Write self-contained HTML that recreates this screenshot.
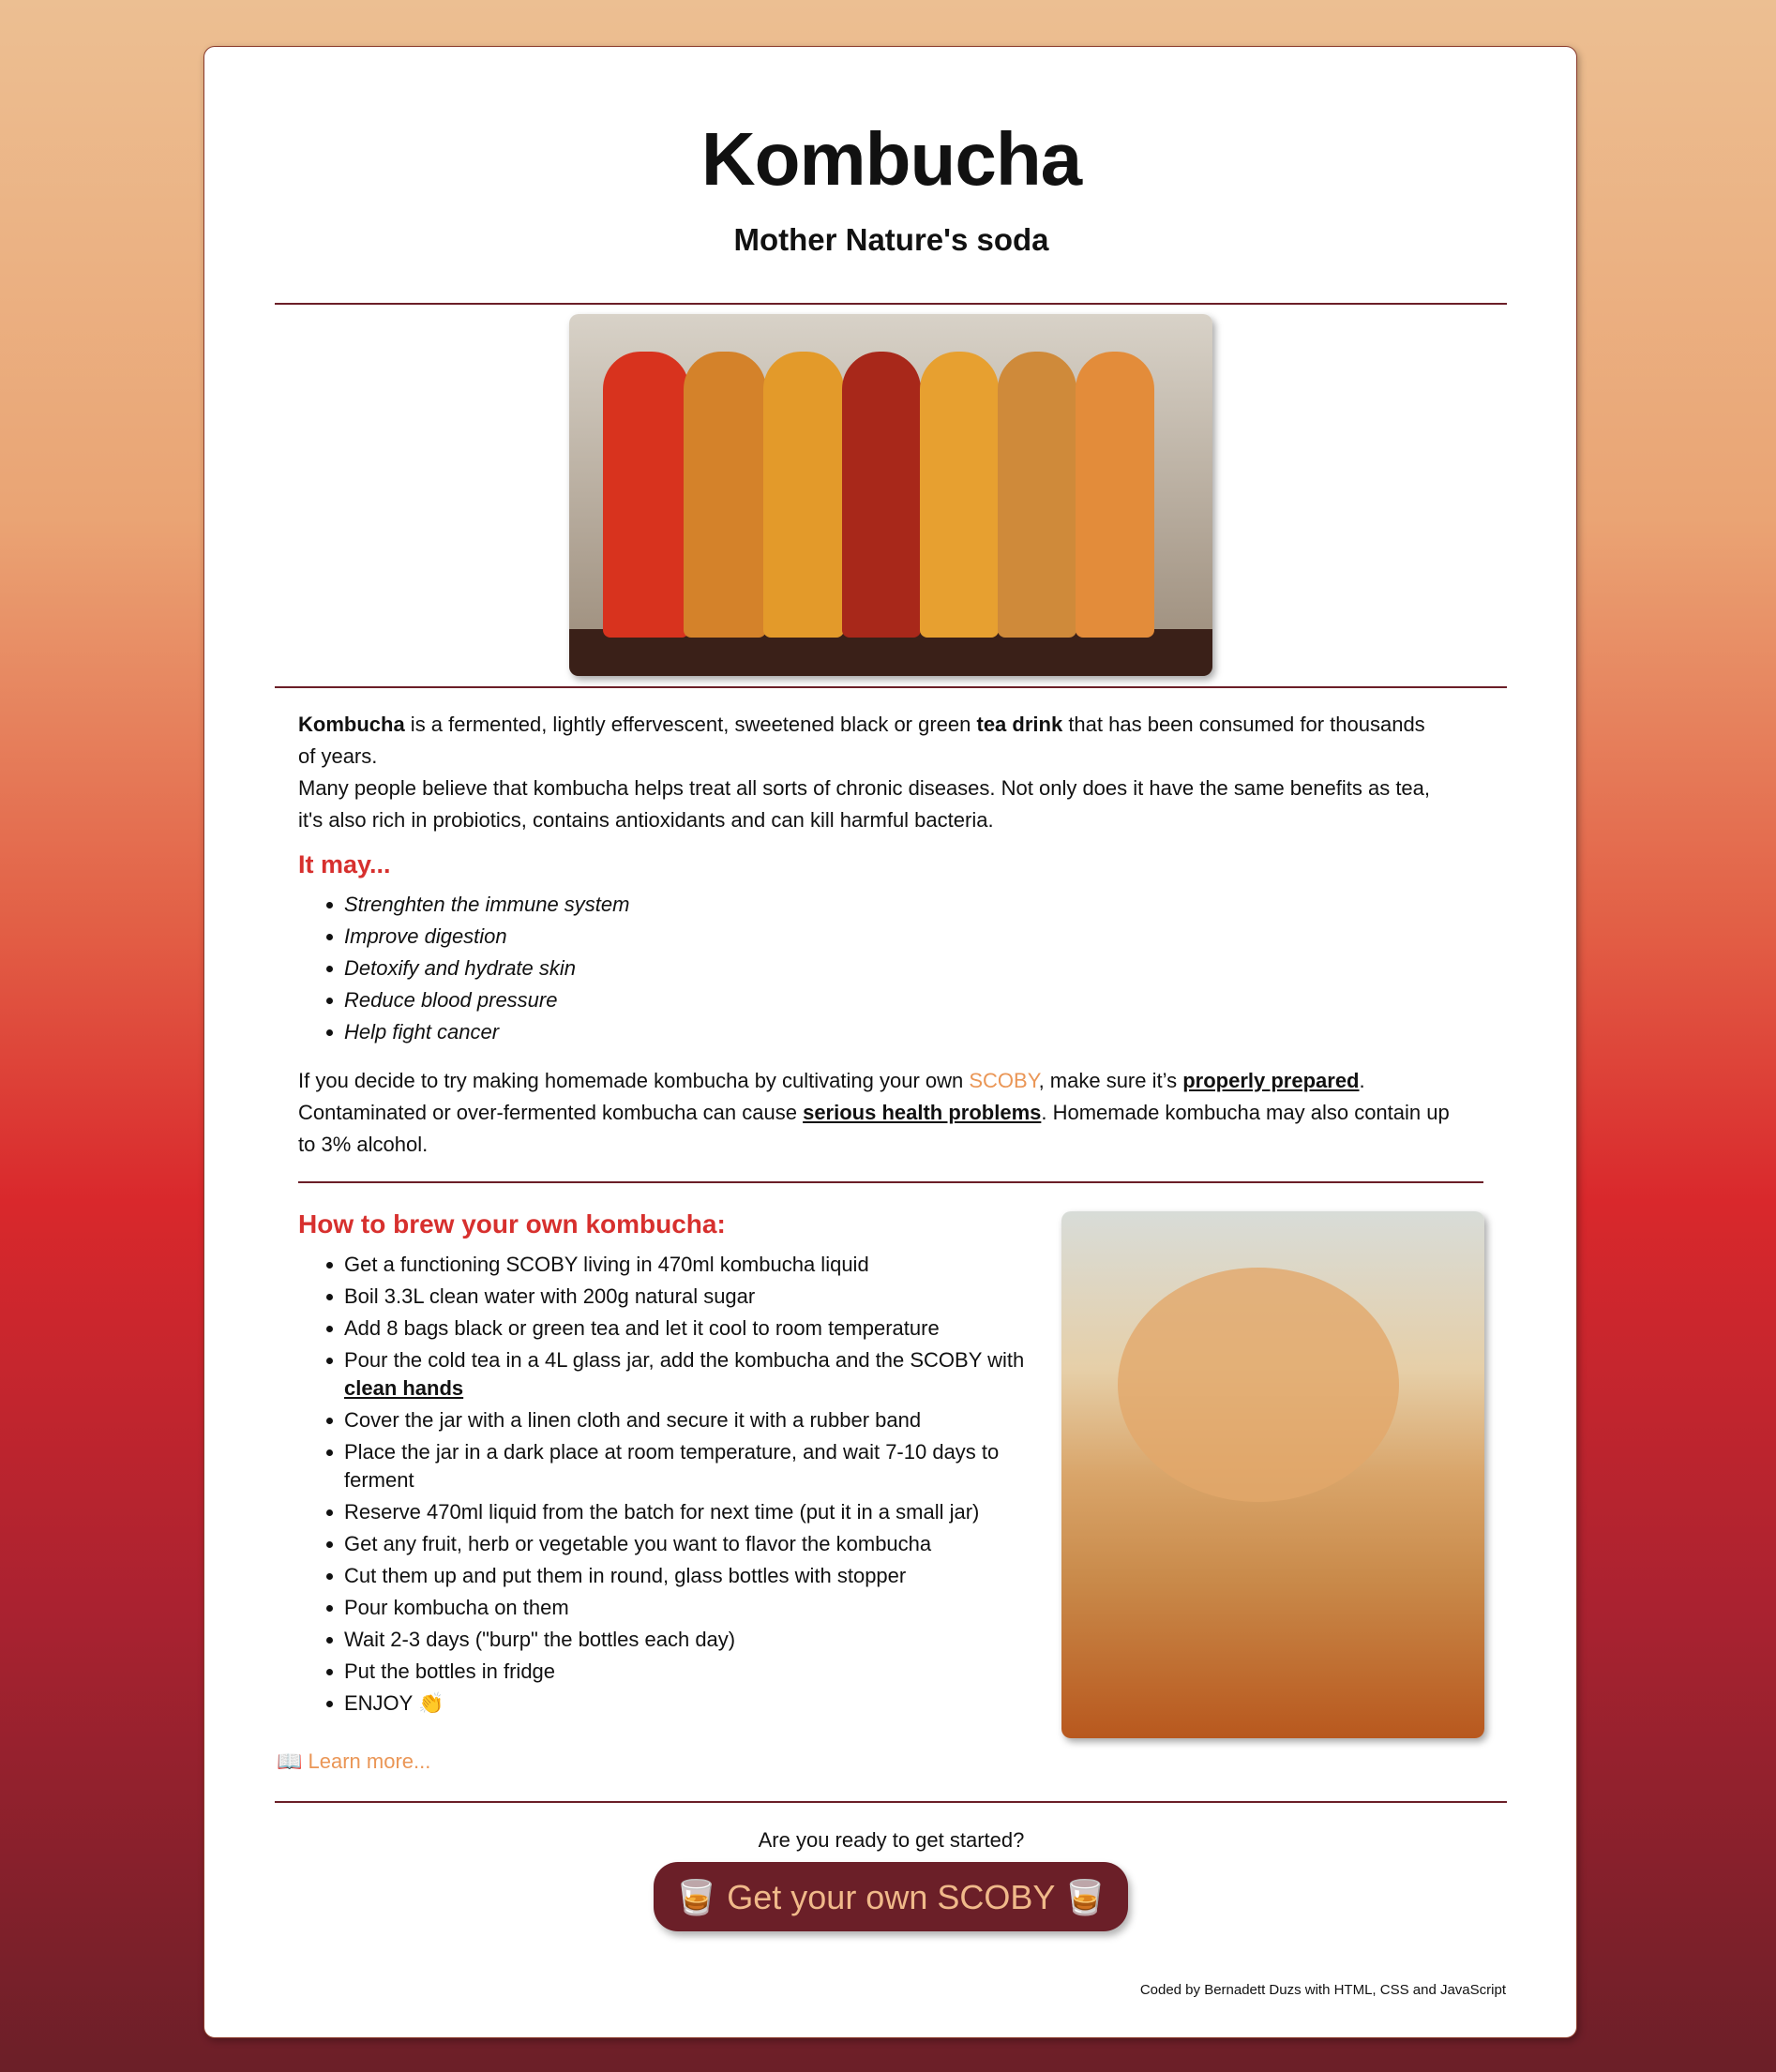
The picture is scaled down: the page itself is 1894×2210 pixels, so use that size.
<!DOCTYPE html>
<html><head><meta charset="utf-8"><style>
*{box-sizing:border-box;margin:0;padding:0}
html,body{width:1894px;height:2210px;overflow:hidden}
body{background:linear-gradient(180deg,#ecbf92 0%,#eaa474 25%,#e25e45 45%,#d9282c 58%,#a92230 78%,#6b1f28 100%);font-family:"Liberation Sans","DejaVu Sans",sans-serif;color:#111;position:relative}
.card{position:absolute;left:217px;top:49px;width:1465px;height:2125px;background:#fff;border:1px solid #8a3a2a;border-radius:12px;box-shadow:2px 3px 8px rgba(0,0,0,.3)}
.a{position:absolute;white-space:nowrap}
hr{position:absolute;border:0;height:2px;background:#6b1f28}
.t{font-size:22px;line-height:34px}
ul{position:absolute;list-style:none}
ul li{position:relative;padding-left:0;font-size:22px;line-height:34px}
ul li:before{content:"";position:absolute;left:-19px;top:14px;width:7px;height:7px;border-radius:50%;background:#111}
.red{color:#d7302e}
u{text-decoration:underline;font-weight:bold}
</style></head><body>
<div class="card">
<div class="a" style="left:0;width:1465px;text-align:center;top:74px;font-size:80px;font-weight:bold;letter-spacing:-1px">Kombucha</div>
<div class="a" style="left:0;width:1465px;text-align:center;top:187px;font-size:33px;font-weight:bold;">Mother Nature's soda</div>
<hr style="left:75px;width:1314px;top:273px">
<div class="a" style="left:389px;top:285px;width:686px;height:386px;border-radius:10px;overflow:hidden;box-shadow:3px 4px 8px rgba(0,0,0,.35);background:linear-gradient(180deg,#d8d2c8,#9a8a78)">
 <div style="position:absolute;left:0;right:0;bottom:0;height:50px;background:#3a2018"></div>
 <div style="position:absolute;left:36px;top:40px;width:92px;height:305px;border-radius:40px 40px 8px 8px;background:#d8331e"></div>
 <div style="position:absolute;left:122px;top:40px;width:88px;height:305px;border-radius:40px 40px 8px 8px;background:#d4822a"></div>
 <div style="position:absolute;left:207px;top:40px;width:86px;height:305px;border-radius:40px 40px 8px 8px;background:#e39a2a"></div>
 <div style="position:absolute;left:291px;top:40px;width:84px;height:305px;border-radius:40px 40px 8px 8px;background:#a8281a"></div>
 <div style="position:absolute;left:374px;top:40px;width:84px;height:305px;border-radius:40px 40px 8px 8px;background:#e7a030"></div>
 <div style="position:absolute;left:457px;top:40px;width:84px;height:305px;border-radius:40px 40px 8px 8px;background:#cf8a3a"></div>
 <div style="position:absolute;left:540px;top:40px;width:84px;height:305px;border-radius:40px 40px 8px 8px;background:#e38c3a"></div>
</div>
<hr style="left:75px;width:1314px;top:682px">
<div class="a t" style="left:100px;top:706px"><b>Kombucha</b> is a fermented, lightly effervescent, sweetened black or green <b>tea drink</b> that has been consumed for thousands<br>of years.<br>Many people believe that kombucha helps treat all sorts of chronic diseases. Not only does it have the same benefits as tea,<br>it's also rich in probiotics, contains antioxidants and can kill harmful bacteria.</div>
<div class="a red" style="left:100px;top:857px;font-size:27px;font-weight:bold">It may...</div>
<ul style="left:149px;top:898px;font-style:italic"><li>Strenghten the immune system</li><li>Improve digestion</li><li>Detoxify and hydrate skin</li><li>Reduce blood pressure</li><li>Help fight cancer</li></ul>
<div class="a t" style="left:100px;top:1086px">If you decide to try making homemade kombucha by cultivating your own <span style="color:#ea9656">SCOBY</span>, make sure it’s <u>properly prepared</u>.<br>Contaminated or over-fermented kombucha can cause <u>serious health problems</u>. Homemade kombucha may also contain up<br>to 3% alcohol.</div>
<hr style="left:100px;width:1264px;top:1210px">
<div class="a red" style="left:100px;top:1240px;font-size:28px;font-weight:bold">How to brew your own kombucha:</div>
<ul style="left:149px;top:1282px;width:770px"><li>Get a functioning SCOBY living in 470ml kombucha liquid</li><li>Boil 3.3L clean water with 200g natural sugar</li><li>Add 8 bags black or green tea and let it cool to room temperature</li><li style="line-height:30px;padding:2px 0">Pour the cold tea in a 4L glass jar, add the kombucha and the SCOBY with <u>clean hands</u></li><li>Cover the jar with a linen cloth and secure it with a rubber band</li><li style="line-height:30px;padding:2px 0">Place the jar in a dark place at room temperature, and wait 7-10 days to ferment</li><li>Reserve 470ml liquid from the batch for next time (put it in a small jar)</li><li>Get any fruit, herb or vegetable you want to flavor the kombucha</li><li>Cut them up and put them in round, glass bottles with stopper</li><li>Pour kombucha on them</li><li>Wait 2-3 days ("burp" the bottles each day)</li><li>Put the bottles in fridge</li><li>ENJOY 👏</li></ul>
<div class="a" style="left:914px;top:1242px;width:451px;height:562px;border-radius:10px;overflow:hidden;box-shadow:3px 4px 8px rgba(0,0,0,.35);background:linear-gradient(180deg,#d8dcd8 0%,#e6cfa8 30%,#d9a56a 50%,#c98a4a 70%,#b8581e 100%)">
 <div style="position:absolute;left:60px;top:60px;width:300px;height:250px;border-radius:50%;background:#e2a86a;opacity:.8"></div>
</div>
<div class="a" style="left:77px;top:1816px;font-size:22px;color:#ea9656">📖 Learn more...</div>
<hr style="left:75px;width:1314px;top:1871px">
<div class="a" style="left:0;width:1465px;text-align:center;top:1900px;font-size:22px">Are you ready to get started?</div>
<div class="a" style="left:479px;top:1936px;width:506px;height:74px;border-radius:26px;background:#6b1f28;color:#f0b98a;font-size:36px;text-align:center;line-height:76px;box-shadow:3px 5px 8px rgba(0,0,0,.3)">🥃 Get your own SCOBY 🥃</div>
<div class="a" style="right:75px;top:2064px;font-size:15px">Coded by Bernadett Duzs with HTML, CSS and JavaScript</div>
</div>
</body></html>
